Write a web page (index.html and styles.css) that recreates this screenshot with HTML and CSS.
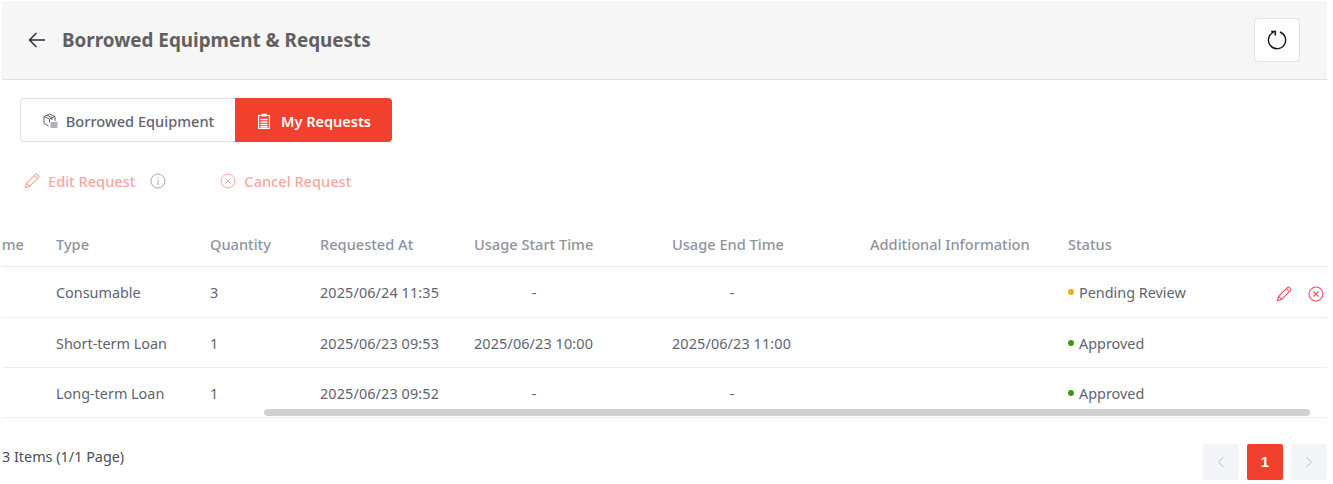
FILE: index.html
```html
<!DOCTYPE html>
<html lang="en">
<head>
<meta charset="utf-8">
<title>Borrowed Equipment &amp; Requests</title>
<link rel="stylesheet" href="styles.css">
</head>
<body>
<main class="page">
  <header class="topbar">
    <div class="topbar-left">
      <svg class="back" width="20" height="20" viewBox="0 0 20 20" fill="none" stroke="#2a2f3a" stroke-width="1.5"><path d="M18 10H2.500M9.500 3 2.500 10l7 7"/></svg>
      <h1 class="title">Borrowed Equipment &amp; Requests</h1>
    </div>
    <button class="refresh" aria-label="Refresh">
      <svg width="20" height="20" viewBox="0 0 20 20" fill="none" stroke="#161616" stroke-width="1.400"><path d="M6.600 2.200A8.600 8.600 0 1 0 13 2"/><path d="M4.200 1.500H8.300V5.600" stroke-width="1.600"/></svg>
    </button>
  </header>

  <div class="tabs">
    <button class="tab">
      <svg width="16" height="16" viewBox="0 0 16 16" fill="none" stroke="#5f6470" stroke-width="1"><path d="M7.500 1 2 3.500v7L6.500 13M7.500 1 13 3.500V8M2 3.500 7.500 6 13 3.500M7.500 6v3.500M4.500 2.200 10 4.700V7"/><path d="M8.500 10h7M8.500 12h7M8.500 14h7"/></svg>
      Borrowed Equipment
    </button>
    <button class="tab tab-active">
      <svg width="16" height="16" viewBox="0 0 16 16" fill="none" stroke="#fff" stroke-width="1.200"><path d="M5 2.500H2.600v12.900h10.800V2.500H11"/><path stroke-width="2.800" d="M5.300 2.100h5.400"/><path stroke-width="1.500" d="M4.500 6.500h7M4.500 9h7M4.500 11.500h7M4.500 13.700h7"/></svg>
      My Requests
    </button>
  </div>

  <div class="toolbar">
    <span class="tool">
      <svg width="16" height="16" viewBox="0 0 16 16" fill="none" stroke="#f9a89f" stroke-width="1.100"><path d="M1.300 14.700 2.600 10.400 11.600 1.400a1.200 1.200 0 0 1 1.700 0l1.300 1.300a1.200 1.200 0 0 1 0 1.700L5.600 13.400ZM2.600 10.400l3 3M10.400 2.600l3 3"/></svg>
      Edit Request
    </span>
    <svg class="info" width="16" height="16" viewBox="0 0 16 16" fill="none" stroke="#a8a8a8" stroke-width="1"><circle cx="8" cy="8" r="7"/><path d="M8 7v5M8 4.200v1.300"/></svg>
    <span class="tool tool-cancel">
      <svg width="16" height="16" viewBox="0 0 16 16" fill="none" stroke="#f9a89f" stroke-width="1"><circle cx="8" cy="8" r="7"/><path d="m5.500 5.500 5 5M10.500 5.500l-5 5"/></svg>
      Cancel Request
    </span>
  </div>

  <div class="table-wrap">
    <table class="table">
      <thead>
        <tr>
          <th class="col-name">Name</th>
          <th class="col-type">Type</th>
          <th class="col-qty">Quantity</th>
          <th class="col-req">Requested At</th>
          <th class="col-start">Usage Start Time</th>
          <th class="col-end">Usage End Time</th>
          <th class="col-info">Additional Information</th>
          <th class="col-status">Status</th>
          <th class="col-act"></th>
        </tr>
      </thead>
      <tbody>
        <tr>
          <td></td><td>Consumable</td><td>3</td><td class="date">2025/06/24 11:35</td>
          <td><span class="time dash">-</span></td><td><span class="time dash">-</span></td><td></td>
          <td><span class="dot dot-pending"></span>Pending Review</td>
          <td class="actions">
            <svg width="16" height="16" viewBox="0 0 16 16" fill="none" stroke="#f4525f" stroke-width="1.100"><path d="M1.300 14.700 2.600 10.400 11.600 1.400a1.200 1.200 0 0 1 1.700 0l1.300 1.300a1.200 1.200 0 0 1 0 1.700L5.600 13.400ZM2.600 10.400l3 3M10.400 2.600l3 3"/></svg>
            <svg width="16" height="16" viewBox="0 0 16 16" fill="none" stroke="#f4525f" stroke-width="1.100"><circle cx="8" cy="8" r="7"/><path d="m5.500 5.500 5 5M10.500 5.500l-5 5"/></svg>
          </td>
        </tr>
        <tr>
          <td></td><td>Short-term Loan</td><td>1</td><td class="date">2025/06/23 09:53</td>
          <td><span class="time date">2025/06/23 10:00</span></td><td><span class="time date">2025/06/23 11:00</span></td><td></td>
          <td><span class="dot dot-ok"></span>Approved</td><td></td>
        </tr>
        <tr>
          <td></td><td>Long-term Loan</td><td>1</td><td class="date">2025/06/23 09:52</td>
          <td><span class="time dash">-</span></td><td><span class="time dash">-</span></td><td></td>
          <td><span class="dot dot-ok"></span>Approved</td><td></td>
        </tr>
      </tbody>
    </table>
    <div class="scrollbar"></div>
  </div>

  <footer class="footer">
    <span class="count">3 Items (1/1 Page)</span>
    <nav class="pager">
      <span class="page-btn"><svg width="10" height="12" viewBox="0 0 10 12" fill="none" stroke="#b9bcc4"><path d="M7.500 1 2.500 6l5 5"/></svg></span>
      <span class="page-btn page-current">1</span>
      <span class="page-btn"><svg width="10" height="12" viewBox="0 0 10 12" fill="none" stroke="#b9bcc4"><path d="M2.500 1l5 5-5 5"/></svg></span>
    </nav>
  </footer>
</main>
</body>
</html>
```

FILE: styles.css
```css
* { box-sizing: border-box; }
html, body { margin: 0; height: 100%; background: #fff; overflow: hidden; }
body { font-family: "Noto Sans", "Open Sans", sans-serif; font-size: 14.4px; color: #5f6470; }
.page { margin: 1px 6px 0 2px; }

.topbar { height: 79px; background: #f6f6f6; border-bottom: 1px solid #e1e1e6; display: flex; align-items: center; justify-content: space-between; padding: 0 27px 0 25px; }
.topbar-left { display: flex; align-items: center; gap: 15px; }
.title { margin: 0; font-size: 18.85px; font-weight: 700; color: #606060; line-height: 28px; }
.back { display: block; }
.refresh { width: 46px; height: 44px; background: #fff; border: 1px solid #e1e1e6; border-radius: 4px; display: flex; align-items: center; justify-content: center; padding: 0; }

.tabs { display: flex; margin: 18px 0 0 18px; height: 44px; width: 372px; }
.tab { font: 500 14.6px "Noto Sans", sans-serif; color: #5f6470; background: #fff; border: 1px solid #e1e1e6; border-right: 0; border-radius: 4px 0 0 4px; width: 215px; display: flex; align-items: center; justify-content: center; gap: 8px; padding: 2px 0 0; }
.tab-active { width: 157px; background: #f1402d; color: #fff; border: 0; border-radius: 0 4px 4px 0; font-size: 14.5px; font-weight: 600; gap: 9px; }

.toolbar { display: flex; align-items: center; height: 24px; margin: 27px 0 0 22px; color: #f9a89f; font-weight: 500; font-size: 14.6px; }
.tool { display: flex; align-items: center; gap: 8px; }
.info { margin-left: 15px; }
.tool-cancel { margin-left: 54px; }

.table-wrap { position: relative; margin-top: 30px; overflow: hidden; }
.table { border-collapse: collapse; table-layout: fixed; width: 1325px; }
.table th, .table td { padding: 0; text-align: left; white-space: nowrap; }
.table th { height: 43px; color: #8f939c; font-weight: 500; font-size: 14.6px; border-bottom: 1px solid #e8eaf0; }
.table td { height: 50px; border-bottom: 1px solid #edeef2; padding-top: 2px; }
.table tbody tr:first-child td { height: 51px; padding-top: 1px; }
.col-name { width: 54px; }
.table .col-name { direction: rtl; padding-right: 32px; overflow: hidden; }
.col-type { width: 154px; }
.col-qty { width: 110px; }
.col-req { width: 154px; }
.col-start { width: 198px; }
.col-end { width: 198px; }
.col-info { width: 198px; }
.col-status { width: 190px; }
.date { letter-spacing: .12px; }
.time { display: inline-block; width: 119px; }
.dash { text-align: center; padding-left: 1px; }
.dot { display: inline-block; width: 6px; height: 6px; border-radius: 50%; margin-right: 5px; vertical-align: 3px; }
.dot-pending { background: #efac1c; }
.dot-ok { background: #3f9714; }
.table .actions { padding-left: 18px; }
.actions svg { vertical-align: middle; margin-right: 12px; }
.scrollbar { position: absolute; left: 262px; top: 186px; width: 1046px; height: 7px; border-radius: 4px; background: #d0d0d0; }

.footer { display: flex; align-items: center; justify-content: space-between; margin-top: 26px; height: 36px; }
.count { color: #4a4f5a; margin-bottom: 10px; }
.pager { display: flex; gap: 8px; }
.page-btn { width: 36px; height: 36px; background: #f4f5f9; border-radius: 2px; display: flex; align-items: center; justify-content: center; }
.page-current { background: #f1402d; color: #fff; font-weight: 700; font-family: "Liberation Sans", sans-serif; font-size: 15px; }
```
